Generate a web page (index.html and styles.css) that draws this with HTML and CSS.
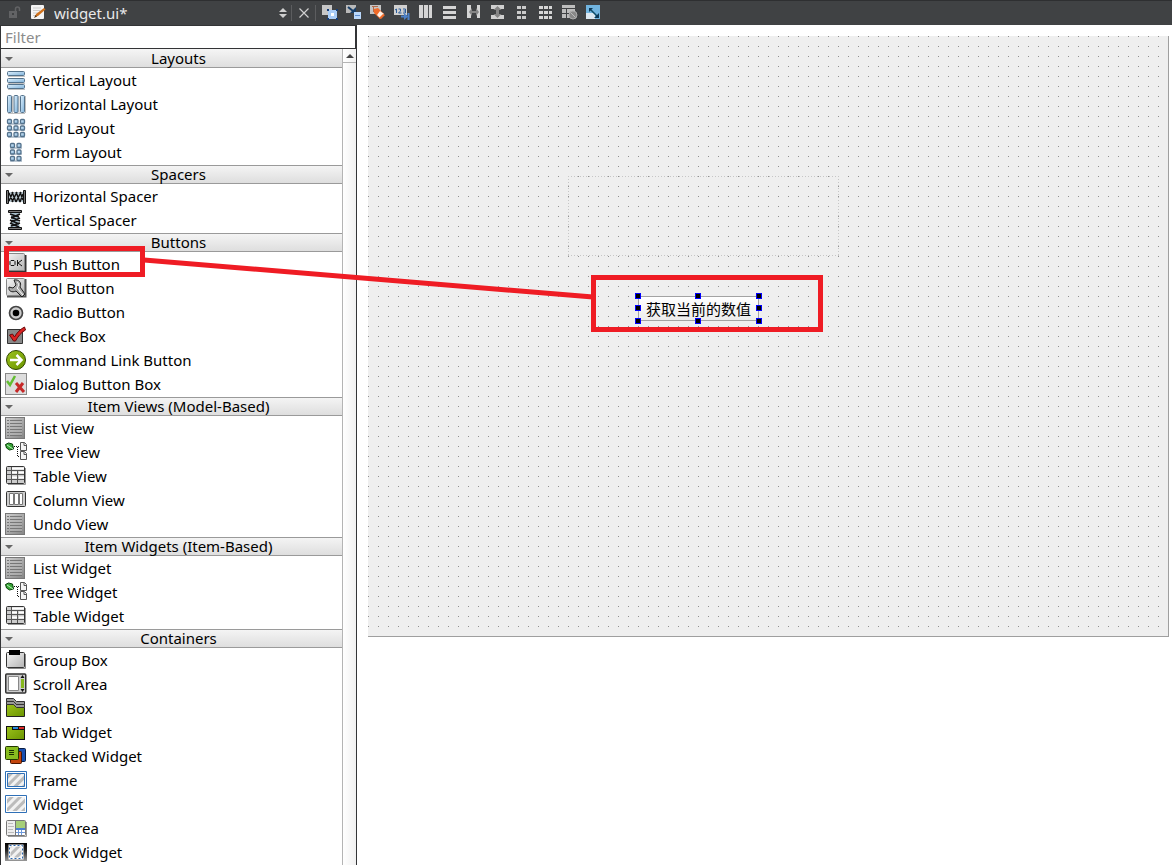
FILE: index.html
```
<!DOCTYPE html>
<html lang="en">
<head>
<meta charset="utf-8">
<title>widget.ui</title>
<link rel="stylesheet" href="styles.css">
</head>
<body>
<svg class="defs" aria-hidden="true">
  <defs>
    <linearGradient id="blue" x1="0" y1="0" x2="1" y2="1"><stop offset="0" stop-color="#e0f1fd"/><stop offset="1" stop-color="#7fb2da"/></linearGradient>
    <linearGradient id="grey" x1="0" y1="0" x2="1" y2="1"><stop offset="0" stop-color="#f6f6f6"/><stop offset="1" stop-color="#b4b4b4"/></linearGradient>
    <linearGradient id="list" x1="0" y1="0" x2="1" y2="1"><stop offset="0" stop-color="#cfcfcf"/><stop offset="1" stop-color="#858585"/></linearGradient>
    <linearGradient id="green" x1="0" y1="0" x2="1" y2="1"><stop offset="0" stop-color="#9cc21c"/><stop offset="1" stop-color="#6a9400"/></linearGradient>
    <linearGradient id="dock" x1="0" y1="0" x2="0" y2="1"><stop offset="0" stop-color="#000"/><stop offset=".4" stop-color="#222"/><stop offset="1" stop-color="#999"/></linearGradient>
    <pattern id="hatch" width="6" height="6" patternUnits="userSpaceOnUse" patternTransform="rotate(45)"><path d="M0 0h6v6H0z" fill="#f2f2f2"/><path d="M0 0h3v6H0z" fill="#bcbcbc"/></pattern>
    <symbol id="i-vlay" viewBox="0 0 22 22"><path d="M3 7.500h17M3 14.500h17M3 20.500h17" stroke="#999" opacity=".6"/><g fill="url(#blue)" stroke="#54728c"><rect x="2.500" y="2.500" width="17" height="4" rx="1"/><rect x="2.500" y="9.500" width="17" height="4" rx="1"/><rect x="2.500" y="15.500" width="17" height="4" rx="1"/></g></symbol>
    <symbol id="i-hlay" viewBox="0 0 22 22"><path d="M7.500 3v17M14 3v17M20.500 3v17M3 20.500h17" stroke="#999" opacity=".6"/><g fill="url(#blue)" stroke="#54728c"><rect x="2.500" y="2.500" width="4" height="17" rx="1"/><rect x="9" y="2.500" width="4" height="17" rx="1"/><rect x="15.500" y="2.500" width="4" height="17" rx="1"/></g></symbol>
    <symbol id="i-grid" viewBox="0 0 22 22"><g fill="#8fa3b5"><path d="M3 6h17v2H3zM3 12h17v2H3zM3 19h17v2H3z" opacity=".6"/></g><g fill="url(#blue)" stroke="#54728c" stroke-width="1.300"><rect x="2.500" y="2.500" width="4" height="4" rx="1"/><rect x="9" y="2.500" width="4" height="4" rx="1"/><rect x="15.500" y="2.500" width="4" height="4" rx="1"/><rect x="2.500" y="9" width="4" height="4" rx="1"/><rect x="9" y="9" width="4" height="4" rx="1"/><rect x="15.500" y="9" width="4" height="4" rx="1"/><rect x="2.500" y="15.500" width="4" height="4" rx="1"/><rect x="9" y="15.500" width="4" height="4" rx="1"/><rect x="15.500" y="15.500" width="4" height="4" rx="1"/></g></symbol>
    <symbol id="i-form" viewBox="0 0 22 22"><g fill="#8fa3b5"><path d="M5 6h12v2H5zM5 12h12v2H5zM5 19h12v2H5z" opacity=".6"/></g><g fill="url(#blue)" stroke="#54728c" stroke-width="1.300"><rect x="5.500" y="2.500" width="4" height="4" rx="1"/><rect x="12" y="2.500" width="4" height="4" rx="1"/><rect x="5.500" y="9" width="4" height="4" rx="1"/><rect x="12" y="9" width="4" height="4" rx="1"/><rect x="5.500" y="15.500" width="4" height="4" rx="1"/><rect x="12" y="15.500" width="4" height="4" rx="1"/></g></symbol>
    <symbol id="i-hsp" viewBox="0 0 22 22"><path d="M4 7h14v10H4z" fill="#b9c8d0"/><path d="M4 8l4 9M7 7l4 10M11 7l4 10M15 7l3 8M4 16l4-9M7 17l5-10M11 17l5-10M15 17l3-8" fill="none" stroke="#111" stroke-width="1.400"/><path d="M1.500 5.500h2v13h-2zM18.500 5.500h2v13h-2z" fill="#777" stroke="#111"/></symbol>
    <symbol id="i-vsp" viewBox="0 0 22 22"><path d="M5 4h10l-2 7 2 7H5l2-7z" fill="#a7bfcc"/><path d="M5 5l9 3M6 8l9 4M5 11l9 4M5 14l9 4M15 5L6 9M15 9l-9 4M15 14l-9 3" fill="none" stroke="#111" stroke-width="1.600"/><path d="M3.500 1.500h13v2h-13zM3.500 18.500h13v2h-13z" fill="#777" stroke="#111"/></symbol>
    <symbol id="i-push" viewBox="0 0 22 22"><path d="M2 18.500h18.500V2" fill="none" stroke="#333" stroke-width="2"/><rect x="1.500" y=".5" width="18" height="17" rx="1" fill="url(#grey)" stroke="#888"/><path d="M6 7.500h3l1 1v3l-1 1H6l-1-1v-3zM12.500 7v6M17 7l-4 3 4 3" fill="none" stroke="#111"/></symbol>
    <symbol id="i-tool" viewBox="0 0 22 22"><path d="M2 19.500h18.500V2" fill="none" stroke="#555" stroke-width="2"/><rect x="1.500" y="1.500" width="18" height="17" rx="1" fill="url(#grey)" stroke="#888"/><path d="M9 3c5-1 8 3 6 7l5 7-3 3-6-6c-4 2-8 0-7-4l4 1 3-3z" fill="#aaa" stroke="#222"/><path d="M12 5c2 1 2 4 0 6l6 7" fill="none" stroke="#fff"/></symbol>
    <symbol id="i-radio" viewBox="0 0 22 22"><circle cx="11" cy="12" r="6.500" fill="#ccc" stroke="#444" stroke-width="1.700"/><circle cx="11" cy="12" r="3.300" fill="#000"/></symbol>
    <symbol id="i-check" viewBox="0 0 22 22"><path d="M2.500 4.500h15v14h-15z" fill="#888" stroke="#333"/><path d="M4.500 10l3-1 2 3c2-4 6-8 10-10l1 3c-4 2-8 7-10 11h-2z" fill="#db2222" stroke="#6c0a0a"/></symbol>
    <symbol id="i-cmd" viewBox="0 0 22 22"><circle cx="11" cy="11" r="9.500" fill="url(#green)" stroke="#304500"/><path d="M5 11h11M11.500 6l5 5-5 5" fill="none" stroke="#fff" stroke-width="2.500"/></symbol>
    <symbol id="i-dlg" viewBox="0 0 22 22"><rect x=".5" y=".5" width="21" height="21" fill="#ddd" stroke="#888"/><path d="M2 8l3 4 5-9" fill="none" stroke="#62bd30" stroke-width="2.500"/><path d="M11 10l8 9M18 10l-7 9" stroke="#c62828" stroke-width="3"/></symbol>
    <symbol id="i-list" viewBox="0 0 22 22"><rect x=".5" y=".5" width="19" height="21" fill="url(#list)" stroke="#777"/><path d="M2 3.500h2m1 0h12M2 6.500h2m1 0h12M2 9.500h2m1 0h12M2 12.500h2m1 0h12M2 15.500h2m1 0h12M2 18.500h2m1 0h12" stroke="#777"/><path d="M5 5h12M5 8h12M5 11h12M5 14h12M5 17h12" stroke="#bcbcbc"/></symbol>
    <symbol id="i-tree" viewBox="0 0 22 22"><path d="M.5 3.500l3-1.500 4 1 1 5-4 1-3-2z" fill="#35a535" stroke="#083f08"/><path d="M2 4l6 4" stroke="#baf0ba"/><path d="M9 5.500h7M12.500 6v10M13 15.500h3" stroke="#111" stroke-dasharray="1 1"/><path d="M15.500 1.500h4l2 2v6h-6zM15.500 10.500h4l2 2v6h-6z" fill="#f4f4f4" stroke="#555"/><path d="M19 1.500v3h3M19 10.500v3h3" fill="none" stroke="#555"/></symbol>
    <symbol id="i-table" viewBox="0 0 22 22"><path d="M3 19.500h17.500V3" fill="none" stroke="#999"/><rect x="1.500" y="1.500" width="18" height="17" rx="1" fill="#ccc" stroke="#333"/><path d="M7 3.500h12M7 7.500h5M14 7.500h5M7 12.500h5M14 12.500h5" stroke="#fff" stroke-width="2"/><path d="M2 5.500h17M2 9.500h17M2 14.500h17M6.500 2v16M12.500 5v13" stroke="#555"/></symbol>
    <symbol id="i-col" viewBox="0 0 22 22"><rect x="1.500" y="2.500" width="19" height="15" rx="1" fill="#ccc" stroke="#333"/><g fill="#fff" stroke="#777"><path d="M4.500 4.500h4v11h-4zM9.500 4.500h4v11h-4zM14.500 4.500h3v11h-3z"/></g></symbol>
    <symbol id="i-group" viewBox="0 0 22 22"><path d="M3 19.500h17.500V5" fill="none" stroke="#888"/><rect x="1.500" y="3.500" width="18" height="15" rx="1" fill="url(#grey)" stroke="#333"/><path d="M4 1h11v5H4z" fill="#000"/></symbol>
    <symbol id="i-scroll" viewBox="0 0 22 22"><rect x=".75" y="1" width="20" height="19" rx="1" fill="#ccc" stroke="#333" stroke-width="1.500"/><path d="M3.500 3.500h10v14h-10z" fill="#fff" stroke="#888"/><path d="M16 6h3v9h-3z" fill="#86b81c"/><path d="M15.500 5l2-3 2 3zM15.500 16l2 3 2-3z" fill="#111"/></symbol>
    <symbol id="i-tbox" viewBox="0 0 22 22"><path d="M1.500 7.500h8l3 3h7v9h-18z" fill="url(#green)" stroke="#222"/><path d="M1.500 1.500h7l3 3h8v3h-8l-3-3h-7zM1.500 4.500h7l3 3h8v3h-8l-3-3h-7z" fill="#999" stroke="#333"/></symbol>
    <symbol id="i-tab" viewBox="0 0 22 22"><rect x="1.500" y="5.500" width="18" height="13" fill="url(#green)" stroke="#111"/><path d="M7 5h13v4H7z" fill="#111"/><path d="M8 6h5v2H8z" fill="#2989dc"/><path d="M14 6h5v2h-5z" fill="#dd2929"/></symbol>
    <symbol id="i-stack" viewBox="0 0 22 22"><rect x="9.500" y="3.500" width="11" height="13" rx="1" fill="#194fb0" stroke="#091c42"/><rect x="5.500" y="6.500" width="11" height="12" rx="1" fill="#c3440c" stroke="#4a1500"/><rect x=".5" y="1.500" width="13" height="13" rx="1" fill="#88bd1f" stroke="#233800"/><path d="M4 5.500h5M4 7.500h5M4 9.500h5" stroke="#193000"/></symbol>
    <symbol id="i-frame" viewBox="0 0 22 22"><path d="M.5 2.500h21v17H.5z" fill="#fff" stroke="#2f70b7"/><path d="M2.500 4.500h17v13h-17z" fill="url(#hatch)" stroke="#2f70b7"/></symbol>
    <symbol id="i-widget" viewBox="0 0 22 22"><path d="M.5 2.500h21v17H.5z" fill="#fff" stroke="#2f70b7"/><path d="M2 4h18v14H2z" fill="url(#hatch)"/></symbol>
    <symbol id="i-mdi" viewBox="0 0 22 22"><path d="M3 19.500h18.500V5" fill="none" stroke="#999"/><rect x="1.500" y="3.500" width="19" height="15" rx="1" fill="#eee" stroke="#777"/><path d="M11 4h9v7h-9z" fill="#a6cf78"/><path d="M3 6.500h5M3 9.500h6M3 12.500h5M3 15.500h6" stroke="#bbb"/><path d="M11 11h9v7h-9z" fill="#fff"/><path d="M11 11h9v2h-9z" fill="#4c7fd0"/><path d="M11 15.500h9M13.500 13v5M16.500 13v5" stroke="#6c98da"/><path d="M10.500 4v14" stroke="#777"/></symbol>
    <symbol id="i-dock" viewBox="0 0 22 22"><path d="M0 2h22v18H0z" fill="url(#dock)"/><path d="M4.500 4.500h13v13h-13z" fill="url(#hatch)" stroke="#fff" stroke-width="2"/><path d="M4.500 4.500h13v13h-13z" fill="none" stroke="#2866b0" stroke-dasharray="2 2"/></symbol>
  </defs>
</svg>

<header class="toolbar">
  <button class="tool lock" aria-label="Lock"><svg width="16" height="16" viewBox="0 0 16 16"><path d="M2 6h8v7H2z" fill="#626365"/><path d="M8.500 6V4q0-2 2-2t2 2v2" fill="none" stroke="#626365" stroke-width="1.500"/><path d="M5 8h2v2H5z" fill="#404244"/></svg></button>
  <svg class="doc" width="16" height="16" viewBox="0 0 16 16"><rect x="1" y="0" width="13" height="14" rx="1" fill="#f4f4f4"/><path d="M3 3h8M3 5.500h7M3 8h5M3 10.500h3" stroke="#ccc"/><path d="M5 12l1-3 8-6 1.500 1.500L8 11z" fill="#cf711c"/><path d="M4 13l1.500-3 1.500 1.500z" fill="#553311"/></svg>
  <div class="file">
    <select class="file-select" aria-label="Open document"><option>widget.ui*</option></select>
    <svg class="updown" width="8" height="10" viewBox="0 0 8 10"><path d="M0 4l4-4 4 4zM0 6h8l-4 4z" fill="#cfcfcf"/></svg>
  </div>
  <button class="tool close" aria-label="Close"><svg width="12" height="12" viewBox="0 0 12 12"><path d="M1.500 1.500l9 9M10.500 1.500l-9 9" stroke="#d0d0d0" stroke-width="1.200"/></svg></button>
  <div class="tools">
    <button class="tool" aria-label="Edit Widgets"><svg width="16" height="16" viewBox="0 0 16 16"><path d="M0 0h10v10H0z" fill="#c6c6c6"/><path d="M6 5h9v9H6z" fill="#a9cdf8"/><path d="M9 8h3v3H9z" fill="#fff"/><path d="M5 4h2v2H5zM14 4h2v2h-2zM5 13h2v2H5zM14 13h2v2h-2z" fill="#163e78"/></svg></button>
    <button class="tool" aria-label="Edit Signals/Slots"><svg width="16" height="16" viewBox="0 0 16 16"><path d="M0 0h10v8H0z" fill="#b9b9b9"/><path d="M2 2l5 4" stroke="#173e68" stroke-width="2"/><path d="M4 8h6V2z" fill="#173e68"/><path d="M8 7h7v7H8z" fill="#b9d8fb"/><path d="M9 10.500h5" stroke="#5b8bd0"/></svg></button>
    <button class="tool" aria-label="Edit Buddies"><svg width="16" height="16" viewBox="0 0 16 16"><path d="M0 0h11v9H0z" fill="#c4c4c4"/><path d="M2 1.500h6M3.500 2v5" stroke="#b06a4b"/><path d="M4 4l4-1 6 6-4 5-6-6z" fill="#f06b29"/><path d="M10 6l4 3-4 4-3-3z" fill="#fff0e6"/><path d="M13 9l2 1-4 4-2-1z" fill="#f06b29"/></svg></button>
    <button class="tool" aria-label="Edit Tab Order"><svg width="16" height="16" viewBox="0 0 16 16"><path d="M0 0h13v10H0z" fill="#d0d0d0"/><path d="M1 5l1.500-1v4M4.500 4h2v2l-2 2h3M9 4h2.500v4H9M9.500 6h2" fill="none" stroke="#285b9b"/><path d="M7 11.500h5M14.500 8v7" stroke="#4b80c8" stroke-width="2"/><path d="M10 8l4 3.500-4 3.500z" fill="#4b80c8"/></svg></button>
    <button class="tool" aria-label="Lay Out Horizontally"><svg width="16" height="16" viewBox="0 0 16 16"><path d="M1 0h4v13H1zM6 0h4v13H6zM11 0h3v13h-3z" fill="#d5d5d5"/><path d="M5 0h1v13H5zM10 0h1v13h-1z" fill="#505254"/></svg></button>
    <button class="tool" aria-label="Lay Out Vertically"><svg width="16" height="16" viewBox="0 0 16 16"><path d="M1 1h13v3H1zM1 6h13v3H1zM1 11h13v3H1z" fill="#d5d5d5"/></svg></button>
    <button class="tool" aria-label="Horizontal Splitter"><svg width="16" height="16" viewBox="0 0 16 16"><path d="M1 0h4v13H1zM11 0h3v13h-3z" fill="#d5d5d5"/><path d="M3 7l3-4v3h4V3l3 4-3 4V8H6v3z" fill="#858585"/></svg></button>
    <button class="tool" aria-label="Vertical Splitter"><svg width="16" height="16" viewBox="0 0 16 16"><path d="M1 0h13v4H1zM1 10h13v4H1z" fill="#d0d0d0"/><path d="M7.500 1l4 4H9v4h2.500l-4 4-4-4H6V5H3.500z" fill="#858585"/></svg></button>
    <button class="tool" aria-label="Form Layout"><svg width="16" height="16" viewBox="0 0 16 16"><path d="M3 1h4v3H3zM8 1h4v3H8zM3 6h4v3H3zM8 6h4v3H8zM3 11h4v3H3zM8 11h4v3H8z" fill="#cacaca"/></svg></button>
    <button class="tool" aria-label="Grid Layout"><svg width="16" height="16" viewBox="0 0 16 16"><path d="M1 1h4v3H1zM6 1h4v3H6zM11 1h3v3h-3zM1 6h4v3H1zM6 6h4v3H6zM11 6h3v3h-3zM1 11h4v3H1zM6 11h4v3H6zM11 11h3v3h-3z" fill="#d5d5d5"/></svg></button>
    <button class="tool" aria-label="Break Layout"><svg width="16" height="16" viewBox="0 0 16 16"><path d="M0 0h13v3H0zM0 4h4v4H0zM5 4h8v4H5zM0 9h4v4H0zM5 9h4v4H5z" fill="#bdbdbd"/><circle cx="11" cy="10" r="4" fill="#888" stroke="#aaa"/><path d="M8.500 7.500l5 5" stroke="#bbb"/></svg></button>
    <button class="tool" aria-label="Adjust Size"><svg width="16" height="16" viewBox="0 0 16 16"><path d="M0 0h14v14H0z" fill="#71b4df"/><path d="M0 8h9v6H0z" fill="#dbe7f0"/><path d="M4 4l7 7" stroke="#0c4a66" stroke-width="1.500"/><path d="M3 3h4L3 7zM13 13H8l5-5z" fill="#0c3856"/></svg></button>
  </div>
</header>

<main class="work">
  <aside class="widget-box">
    <input class="filter" type="text" placeholder="Filter" aria-label="Filter">
    <div class="box-body">
      <div class="groups">
        <section><h2 class="head"><button class="head-btn">Layouts</button></h2>
          <ul class="items">
            <li><svg class="ico"><use href="#i-vlay"/></svg>Vertical Layout</li>
            <li><svg class="ico"><use href="#i-hlay"/></svg>Horizontal Layout</li>
            <li><svg class="ico"><use href="#i-grid"/></svg>Grid Layout</li>
            <li><svg class="ico"><use href="#i-form"/></svg>Form Layout</li>
          </ul></section>
        <section><h2 class="head"><button class="head-btn">Spacers</button></h2>
          <ul class="items">
            <li><svg class="ico"><use href="#i-hsp"/></svg>Horizontal Spacer</li>
            <li><svg class="ico"><use href="#i-vsp"/></svg>Vertical Spacer</li>
          </ul></section>
        <section><h2 class="head"><button class="head-btn">Buttons</button></h2>
          <ul class="items">
            <li><svg class="ico"><use href="#i-push"/></svg>Push Button</li>
            <li><svg class="ico"><use href="#i-tool"/></svg>Tool Button</li>
            <li><svg class="ico"><use href="#i-radio"/></svg>Radio Button</li>
            <li><svg class="ico"><use href="#i-check"/></svg>Check Box</li>
            <li><svg class="ico"><use href="#i-cmd"/></svg>Command Link Button</li>
            <li><svg class="ico"><use href="#i-dlg"/></svg>Dialog Button Box</li>
          </ul></section>
        <section><h2 class="head"><button class="head-btn">Item Views (Model-Based)</button></h2>
          <ul class="items">
            <li><svg class="ico"><use href="#i-list"/></svg>List View</li>
            <li><svg class="ico"><use href="#i-tree"/></svg>Tree View</li>
            <li><svg class="ico"><use href="#i-table"/></svg>Table View</li>
            <li><svg class="ico"><use href="#i-col"/></svg>Column View</li>
            <li><svg class="ico"><use href="#i-list"/></svg>Undo View</li>
          </ul></section>
        <section><h2 class="head"><button class="head-btn">Item Widgets (Item-Based)</button></h2>
          <ul class="items">
            <li><svg class="ico"><use href="#i-list"/></svg>List Widget</li>
            <li><svg class="ico"><use href="#i-tree"/></svg>Tree Widget</li>
            <li><svg class="ico"><use href="#i-table"/></svg>Table Widget</li>
          </ul></section>
        <section><h2 class="head"><button class="head-btn">Containers</button></h2>
          <ul class="items">
            <li><svg class="ico"><use href="#i-group"/></svg>Group Box</li>
            <li><svg class="ico"><use href="#i-scroll"/></svg>Scroll Area</li>
            <li><svg class="ico"><use href="#i-tbox"/></svg>Tool Box</li>
            <li><svg class="ico"><use href="#i-tab"/></svg>Tab Widget</li>
            <li><svg class="ico"><use href="#i-stack"/></svg>Stacked Widget</li>
            <li><svg class="ico"><use href="#i-frame"/></svg>Frame</li>
            <li><svg class="ico"><use href="#i-widget"/></svg>Widget</li>
            <li><svg class="ico"><use href="#i-mdi"/></svg>MDI Area</li>
            <li><svg class="ico"><use href="#i-dock"/></svg>Dock Widget</li>
          </ul></section>
      </div>
      <div class="scrollbar"><button class="scroll-up" aria-label="Scroll up"><svg width="8" height="4" viewBox="0 0 8 4"><path d="M0 4l4-4 4 4z" fill="#444"/></svg></button></div>
    </div>
  </aside>

  <div class="editor">
    <div class="form">
      <div class="empty-label"></div>
      <div class="selected">
        <button class="push" lang="zh">获取当前的数值</button>
        <i class="h t l"></i><i class="h t c"></i><i class="h t r"></i>
        <i class="h m l"></i><i class="h m r"></i>
        <i class="h b l"></i><i class="h b c"></i><i class="h b r"></i>
      </div>
    </div>
  </div>
</main>

<svg class="notes" aria-hidden="true" fill="none" stroke="#ef1c24" stroke-width="5">
  <rect x="6.500" y="248.500" width="136" height="26"/>
  <path d="M144 260L593 297"/>
  <rect x="593.500" y="277.500" width="227" height="52"/>
</svg>
</body>
</html>
```
FILE: styles.css
```
* { box-sizing: border-box; }

body {
  margin: 0;
  min-height: 100vh;
  display: flex;
  flex-direction: column;
  position: relative;
  background: #fff;
  color: #000;
  font: 15px/22px "Noto Sans", "Noto Sans CJK SC", sans-serif;
}

button, input, select { font: inherit; color: inherit; margin: 0; }
button { padding: 0; border: 0; background: none; }
svg { display: block; flex: none; }
.defs { position: absolute; width: 0; height: 0; }

/* toolbar */
.toolbar {
  display: flex;
  align-items: center;
  height: 25px;
  border-top: 1px solid #2e2f31;
  background: #404244;
}
.tool {
  display: flex;
  align-items: center;
  justify-content: center;
  width: 24px;
  height: 22px;
}
.lock { width: 30px; }
.file {
  position: relative;
  display: flex;
  align-items: center;
  width: 246px;
  height: 16px;
  border-right: 1px solid #5c5d5f;
}
.file-select {
  appearance: none;
  width: 100%;
  height: 22px;
  padding: 0 16px 0 8px;
  border: 0;
  background: none;
  color: #e8e8e8;
  line-height: 22px;
}
.updown { position: absolute; right: 4px; }
.close { height: 16px; border-right: 1px solid #5c5d5f; }
.tools { display: flex; padding-left: 2px; }

/* widget box */
.work { display: flex; flex: 1; }
.widget-box {
  display: flex;
  flex-direction: column;
  flex: none;
  width: 357px;
  border: solid #333436;
  border-width: 0 1px;
}
.filter {
  height: 24px;
  padding: 0 4px;
  border: solid #333436;
  border-width: 1px 1px 1px 0;
  background: #fff;
  outline: 0;
}
.filter::placeholder { color: #8c8c8c; opacity: 1; }
.box-body { display: flex; flex: 1; }
.groups { flex: 1; }
.head { margin: 0 0 1px; font-size: 15px; font-weight: 400; }
.head-btn {
  position: relative;
  display: block;
  width: 100%;
  height: 19px;
  padding-left: 14px;
  border: solid #9a9a9a;
  border-width: 1px 0;
  background: linear-gradient(#f4f4f4, #dedede);
  line-height: 17px;
}
section:first-child .head-btn { border-top-color: #f4f4f4; }
.head-btn::before {
  content: "";
  position: absolute;
  left: 4px;
  top: 7px;
  border: solid transparent;
  border-width: 4px 4px 0;
  border-top-color: #666;
}
.items { margin: 0; padding: 0; list-style: none; }
.items li { display: flex; gap: 6px; height: 24px; padding-left: 4px; }
.ico { width: 22px; height: 22px; }
.scrollbar {
  width: 14px;
  border-left: 1px solid #b4b4b4;
  background: linear-gradient(90deg, #fff, #f0f0f0);
}
.scroll-up {
  display: flex;
  align-items: center;
  justify-content: center;
  width: 100%;
  height: 14px;
  border-bottom: 1px solid #b4b4b4;
}

/* form editor */
.editor { flex: 1; padding: 11px 3px 0 11px; }
.form {
  position: relative;
  aspect-ratio: 4 / 3;
  border: solid #9f9f9f;
  border-width: 0 1px 1px 0;
  background: conic-gradient(from 270deg at 1px 1px, #909090 90deg, #efefef 0) 0 0 / 10px 10px;
}
.empty-label {
  position: absolute;
  left: 200px;
  top: 140px;
  width: 271px;
  height: 80px;
  background:
    repeating-linear-gradient(90deg, #c6c6c6 0 1px, transparent 1px 3px) top / 100% 1px no-repeat,
    repeating-linear-gradient(90deg, #c6c6c6 0 1px, transparent 1px 3px) bottom / 100% 1px no-repeat,
    repeating-linear-gradient(#c6c6c6 0 1px, transparent 1px 3px) left / 1px 100% no-repeat,
    repeating-linear-gradient(#c6c6c6 0 1px, transparent 1px 3px) right / 1px 100% no-repeat;
}
.selected { position: absolute; left: 270px; top: 260px; width: 121px; height: 25px; }
.push {
  width: 100%;
  height: 100%;
  padding-top: 1px;
  border: 1px solid #a3a3a3;
  background: linear-gradient(#fff, #ececec);
  line-height: 22px;
  white-space: nowrap;
}
.h { position: absolute; width: 6px; height: 6px; border: 1px solid #00f; background: #000; }
.t { top: -3px; }
.m { top: 9px; }
.b { bottom: -3px; }
.l { left: -3px; }
.c { left: 57px; }
.r { right: -3px; }

.notes { position: absolute; inset: 0; width: 100%; height: 100%; pointer-events: none; }
```
